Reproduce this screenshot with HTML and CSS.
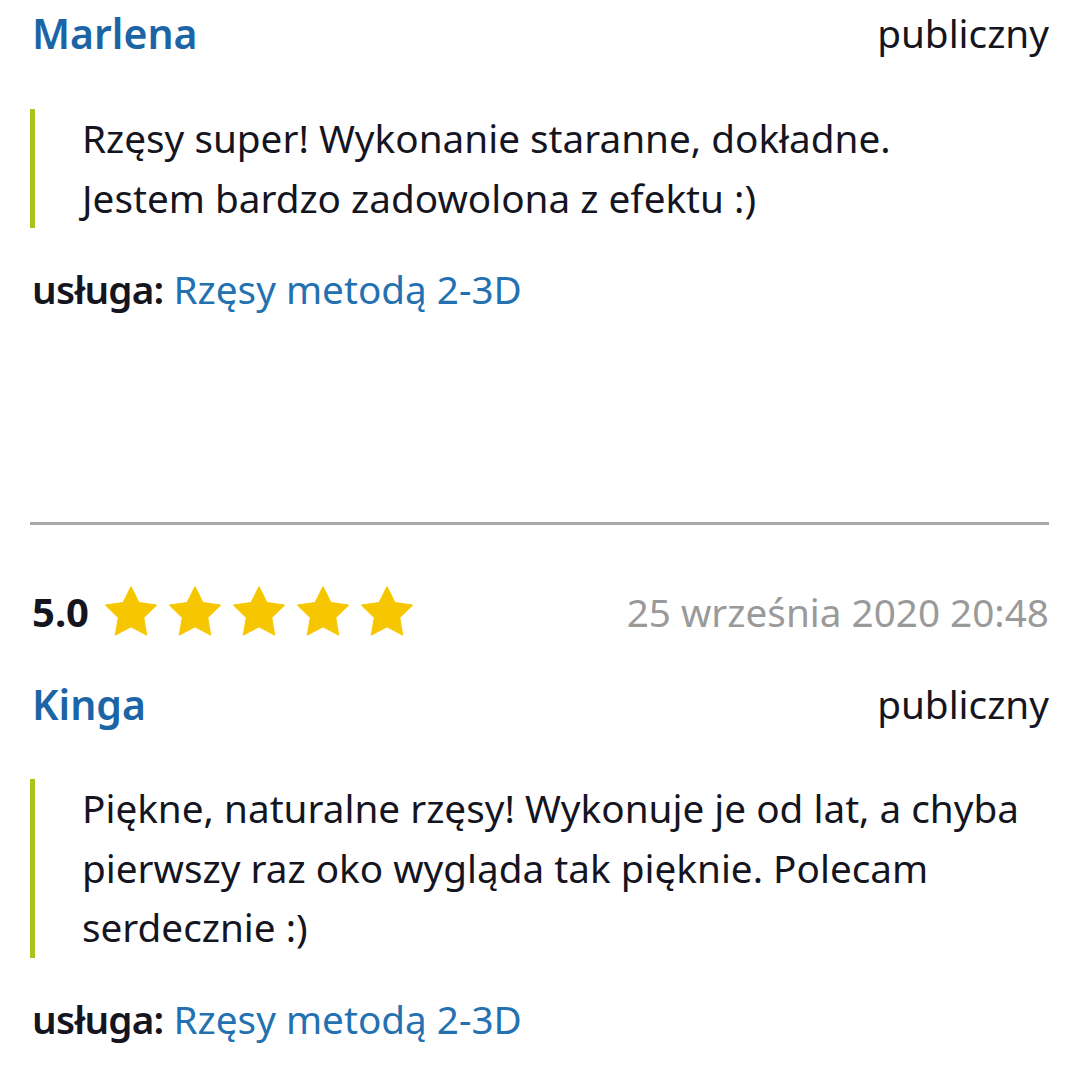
FILE: index.html
```html
<!DOCTYPE html>
<html lang="pl">
<head>
<meta charset="utf-8">
<link rel="stylesheet" href="styles.css">
</head>
<body>
<div class="review first">
  <div class="head">
    <span class="name">Marlena</span>
    <span class="vis">publiczny</span>
  </div>
  <blockquote class="quote">Rzęsy super! Wykonanie staranne, dokładne.<br>Jestem bardzo zadowolona z efektu :)</blockquote>
  <div class="service"><span class="label">usługa:</span> <a class="link">Rzęsy metodą 2-3D</a></div>
</div>
<hr class="divider">
<div class="review">
  <div class="rating-row">
    <div class="rating">
      <span class="score">5.0</span>
      <span class="stars">
        <svg class="star" viewBox="2 2 20 20"><path d="M12 2.6l2.9 5.9 6.5.95-4.7 4.6 1.1 6.5L12 17.5l-5.8 3.05 1.1-6.5-4.7-4.6 6.5-.95z"/></svg>
        <svg class="star" viewBox="2 2 20 20"><path d="M12 2.6l2.9 5.9 6.5.95-4.7 4.6 1.1 6.5L12 17.5l-5.8 3.05 1.1-6.5-4.7-4.6 6.5-.95z"/></svg>
        <svg class="star" viewBox="2 2 20 20"><path d="M12 2.6l2.9 5.9 6.5.95-4.7 4.6 1.1 6.5L12 17.5l-5.8 3.05 1.1-6.5-4.7-4.6 6.5-.95z"/></svg>
        <svg class="star" viewBox="2 2 20 20"><path d="M12 2.6l2.9 5.9 6.5.95-4.7 4.6 1.1 6.5L12 17.5l-5.8 3.05 1.1-6.5-4.7-4.6 6.5-.95z"/></svg>
        <svg class="star" viewBox="2 2 20 20"><path d="M12 2.6l2.9 5.9 6.5.95-4.7 4.6 1.1 6.5L12 17.5l-5.8 3.05 1.1-6.5-4.7-4.6 6.5-.95z"/></svg>
      </span>
    </div>
    <span class="date">25 września 2020 20:48</span>
  </div>
  <div class="head">
    <span class="name">Kinga</span>
    <span class="vis">publiczny</span>
  </div>
  <blockquote class="quote">Piękne, naturalne rzęsy! Wykonuje je od lat, a chyba pierwszy raz oko wygląda tak pięknie. Polecam serdecznie :)</blockquote>
  <div class="service"><span class="label">usługa:</span> <a class="link">Rzęsy metodą 2-3D</a></div>
</div>
</body>
</html>
```
FILE: styles.css
```css
html, body {
  margin: 0;
  padding: 0;
  background: #ffffff;
}
body {
  font-family: "Noto Sans", "Open Sans", sans-serif;
  color: #15151f;
  font-size: 38.7px;
}
.review {
  padding: 0 31px 0 30px;
}
.review.first {
  padding-top: 8px;
  padding-bottom: 203px;
}
.head {
  display: flex;
  justify-content: space-between;
  align-items: center;
  height: 50px;
}
.name {
  color: #1b64a6;
  font-weight: 600;
  font-size: 41px;
  padding-left: 2px;
}
.vis {
  font-size: 38.7px;
  color: #15151f;
}
.quote {
  margin: 51px 0 0 0;
  border-left: 5px solid #a9c41e;
  padding: 0 20px 0 47px;
  line-height: 59.7px;
}
.service {
  margin-top: 30.5px;
  line-height: 60px;
  padding-left: 2px;
}
.label {
  font-weight: 600;
  letter-spacing: -0.8px;
}
.link {
  color: #2471b1;
}
.divider {
  margin: 0 31px 0 30px;
  border: 0;
  height: 3px;
  background: #a8a8a8;
}
.rating-row {
  display: flex;
  justify-content: space-between;
  align-items: center;
  margin-top: 60px;
  height: 54px;
}
.rating {
  display: flex;
  align-items: center;
  padding-left: 2px;
}
.score {
  font-weight: 700;
  font-size: 40px;
  margin-right: 15px;
}
.stars {
  display: flex;
  gap: 10px;
}
.star {
  width: 54px;
  height: 54px;
  fill: #f6c700;
  stroke: #f6c700;
  stroke-width: 0.4;
  stroke-linejoin: round;
}
.date {
  color: #9a9a9a;
  font-size: 38.7px;
}
.rating-row + .head {
  margin-top: 40px;
}
.rating-row ~ .quote {
  margin-top: 50px;
}
```
